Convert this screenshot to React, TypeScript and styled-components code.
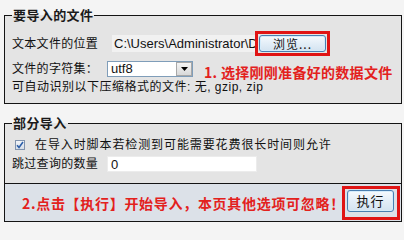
import styled, { createGlobalStyle } from "styled-components"

const GlobalStyle = createGlobalStyle`
  html, body {
    margin: 0;
    background: #f4f4f4;
  }
  body {
    font-family: "Liberation Sans", "Noto Sans CJK SC", sans-serif;
    font-size: 12px;
    color: #111;
  }
`

function ImportForm() {
  return (
    <Page>
      <Fieldset $top={0} $pad="9px 6px 8px 7px">
        <Legend>要导入的文件</Legend>
        <Row $height={23}>
          <Label $width={100}>文本文件的位置</Label>
          <PathInput
            readOnly
            value="C:\Users\Administrator\Desktop\phpmyadmin.sql"
          />
          <Highlight $pad="1px" $left={1}>
            <BrowseButton type="button">浏览...</BrowseButton>
          </Highlight>
        </Row>
        <Row $height={16} $top={6}>
          <Label $width={95}>文件的字符集：</Label>
          <Select>
            <SelectValue>utf8</SelectValue>
            <SelectArrow>
              <svg width="7" height="4" viewBox="0 0 7 4">
                <path d="M0 0h7L3.5 4z" fill="#000" />
              </svg>
            </SelectArrow>
          </Select>
          <Hint $pad={6} $left={11} $spacing={0.3}>
            1. 选择刚刚准备好的数据文件
          </Hint>
        </Row>
        <Row $height={16} $top={2}>
          <Label $spacing={0.5}>可自动识别以下压缩格式的文件: 无, gzip, zip</Label>
        </Row>
      </Fieldset>

      <Fieldset $top={11} $pad="6px 6px 11px 7px">
        <Legend>部分导入</Legend>
        <Row $height={16}>
          <CheckBox>
            <svg width="8" height="8" viewBox="0 0 8 8">
              <path
                d="M1 4.2l2 2.2L7 1"
                fill="none"
                stroke="#2d5fa8"
                strokeWidth="1.6"
              />
            </svg>
          </CheckBox>
          <Label $spacing={0.9}>在导入时脚本若检测到可能需要花费很长时间则允许</Label>
        </Row>
        <Row $height={16} $top={3}>
          <Label $width={95}>跳过查询的数量</Label>
          <SkipInput readOnly value="0" />
        </Row>
      </Fieldset>
      <Footer>
        <Hint $left={10} $spacing={0.7}>
          2.点击【执行】开始导入，本页其他选项可忽略！
        </Hint>
        <Highlight $pad="1px 3px 5px 2px" $left={0}>
          <GoButton type="button">执行</GoButton>
        </Highlight>
      </Footer>
    </Page>
  )
}

export default function App() {
  return (
    <>
      <GlobalStyle />
      <ImportForm />
    </>
  )
}

const Page = styled.div`
  width: 404px;
  height: 224px;
  box-sizing: border-box;
  padding: 7px 2px 0 4px;
  overflow: hidden;
  background: #f4f4f4;
`

const Fieldset = styled.fieldset<{ $top: number; $pad: string }>`
  margin: ${(p) => p.$top}px 0 0;
  padding: ${(p) => p.$pad};
  border: 1px solid #141414;
  background: #e4e4e4;
  min-width: 0;
`

const Legend = styled.legend`
  padding: 0 1px;
  font-family: "Noto Sans CJK SC", sans-serif;
  font-size: 13px;
  font-weight: bold;
  line-height: 16px;
  letter-spacing: 0.4px;
  color: #1a1a1a;
`

const Row = styled.div<{ $height: number; $top?: number }>`
  display: flex;
  align-items: center;
  height: ${(p) => p.$height}px;
  margin-top: ${(p) => p.$top ?? 0}px;
  white-space: nowrap;
`

const Label = styled.span<{ $width?: number; $spacing?: number }>`
  flex: none;
  width: ${(p) => (p.$width ? `${p.$width}px` : "auto")};
  font-size: 12px;
  line-height: 16px;
  letter-spacing: ${(p) => p.$spacing ?? 0.3}px;
`

const PathInput = styled.input`
  width: 146px;
  height: 17px;
  box-sizing: border-box;
  padding: 0 2px;
  border: none;
  background: #f1f1f1;
  font-family: "Liberation Sans", sans-serif;
  font-size: 13px;
  color: #111;
  outline: none;
`

/* red annotation frame drawn over the screenshot; negative margins keep it out of the flow */
const Highlight = styled.span<{ $pad: string; $left: number }>`
  display: inline-flex;
  flex: none;
  padding: ${(p) => p.$pad};
  margin: -4px -4px -4px ${(p) => p.$left - 4}px;
  border: 3px solid #e01414;
`

const WinButton = styled.button`
  box-sizing: border-box;
  border: 1px solid #4a7fb0;
  border-radius: 3px;
  background: linear-gradient(#f6fafd, #e3eef7 50%, #d3e3f0);
  box-shadow: inset 0 0 0 1px #d4ecfb;
  font-family: "Noto Sans CJK SC", sans-serif;
  font-size: 12px;
  color: #111;
  padding: 0;
`

const BrowseButton = styled(WinButton)`
  width: 67px;
  height: 17px;
  line-height: 14px;
  letter-spacing: 1px;
`

const GoButton = styled(WinButton)`
  width: 47px;
  height: 22px;
  font-size: 13px;
  letter-spacing: 1px;
`

const Select = styled.div`
  display: flex;
  align-items: stretch;
  width: 86px;
  height: 16px;
  box-sizing: border-box;
  border: 1px solid #7f9db9;
  background: #fff;
`

const SelectValue = styled.span`
  flex: 1;
  padding-left: 3px;
  font-size: 13px;
  line-height: 14px;
`

const SelectArrow = styled.span`
  display: flex;
  align-items: center;
  justify-content: center;
  width: 14px;
  border: 1px solid #a8a8a8;
  background: linear-gradient(#f4f4f4, #d9d9d9);
`

const Hint = styled.span<{ $pad?: number; $left: number; $spacing: number }>`
  margin-left: ${(p) => p.$left}px;
  padding-top: ${(p) => p.$pad ?? 0}px;
  font-family: "Noto Sans CJK SC", sans-serif;
  font-size: 14px;
  font-weight: bold;
  line-height: 18px;
  letter-spacing: ${(p) => p.$spacing}px;
  color: #e3211d;
`

const CheckBox = styled.span`
  display: flex;
  align-items: center;
  justify-content: center;
  flex: none;
  width: 10px;
  height: 10px;
  box-sizing: border-box;
  margin: 0 10px 0 3px;
  border: 1px solid #8193ad;
  background: linear-gradient(#f1f4f8, #d7dee8);
`

const SkipInput = styled.input`
  width: 150px;
  height: 16px;
  box-sizing: border-box;
  padding: 0 3px;
  border: 1px solid #ececec;
  background: #fff;
  font-family: "Liberation Sans", sans-serif;
  font-size: 13px;
  color: #111;
  outline: none;
`

const Footer = styled.div`
  display: flex;
  align-items: center;
  justify-content: space-between;
  height: 38px;
  box-sizing: border-box;
  padding: 0 5px 0 7px;
  border: 1px solid #141414;
  border-top: none;
  background: #dce1e8;
`
